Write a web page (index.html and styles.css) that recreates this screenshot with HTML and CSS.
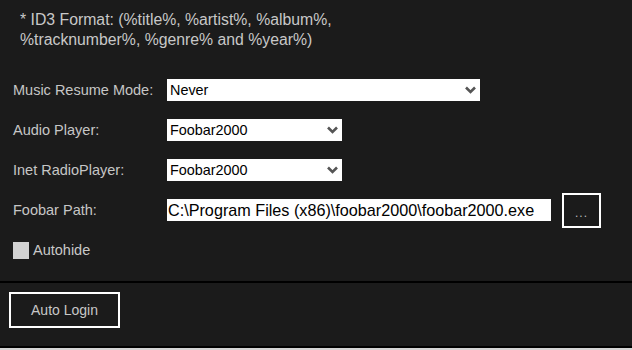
FILE: index.html
```html
<!DOCTYPE html>
<html>
<head>
    <title>Music Settings</title>
    <meta charset="UTF-8">
    <link rel="stylesheet" href="styles.css">
</head>
<body>
    <div class="panel">
        <div class="note">
            * ID3 Format: (%title%, %artist%, %album%,<br>
            %tracknumber%, %genre% and %year%)
        </div>

        <div class="form">
            <div class="row">
                <span class="label">Music Resume Mode:</span>
                <div class="select wide">
                    <span>Never</span>
                    <svg class="chevron" width="11" height="8" viewBox="0 0 11 8"><path d="M1 1.5 L5.5 6 L10 1.5" fill="none" stroke="#555" stroke-width="2.6"/></svg>
                </div>
            </div>
            <div class="row">
                <span class="label">Audio Player:</span>
                <div class="select">
                    <span>Foobar2000</span>
                    <svg class="chevron" width="11" height="8" viewBox="0 0 11 8"><path d="M1 1.5 L5.5 6 L10 1.5" fill="none" stroke="#555" stroke-width="2.6"/></svg>
                </div>
            </div>
            <div class="row">
                <span class="label">Inet RadioPlayer:</span>
                <div class="select">
                    <span>Foobar2000</span>
                    <svg class="chevron" width="11" height="8" viewBox="0 0 11 8"><path d="M1 1.5 L5.5 6 L10 1.5" fill="none" stroke="#555" stroke-width="2.6"/></svg>
                </div>
            </div>
            <div class="row">
                <span class="label">Foobar Path:</span>
                <div class="path">C:\Program Files (x86)\foobar2000\foobar2000.exe</div>
                <div class="browse">...</div>
            </div>
            <div class="row check-row">
                <span class="checkbox"></span>
                <span class="check-label">Autohide</span>
            </div>
        </div>

        <div class="footer">
            <div class="btn">Auto Login</div>
        </div>
    </div>
</body>
</html>
```

FILE: styles.css
```css
body {
    margin: 0;
    background: #d4d4d4;
    font-family: 'Liberation Sans', Arial, sans-serif;
    font-size: 14px;
}
.panel {
    width: 632px;
    height: 348px;
    background: #1b1b1b;
    color: #c6c6c6;
    border-bottom: 2px solid #000;
    box-sizing: border-box;
}

.note {
    padding: 10px 0 0 20px;
    line-height: 20px;
    font-size: 15.8px;
    color: #c8c8c8;
    height: 60px;
    box-sizing: border-box;
}

.form { padding: 10px 0 0 13px; border-bottom: 2px solid #000; height: 223px; box-sizing: border-box; }
.row { display: flex; align-items: center; height: 40px; }
.label { width: 154px; flex: none; font-size: 14.5px; }

.select {
    display: flex;
    align-items: center;
    justify-content: space-between;
    width: 175px;
    height: 22px;
    background: #fff;
    color: #000;
    font-size: 14.4px;
    padding: 0 4px 0 3px;
    box-sizing: border-box;
}
.select.wide { width: 313px; }
.chevron { display: block; }

.path {
    width: 384px;
    height: 22px;
    line-height: 22px;
    background: #fff;
    color: #000;
    font-size: 16.2px;
    padding-left: 1px;
    box-sizing: border-box;
    white-space: nowrap;
    overflow: hidden;
}
.browse {
    width: 39px;
    height: 35px;
    margin-left: 11px;
    border: 2px solid #fff;
    box-sizing: border-box;
    color: #bbb;
    text-align: center;
    line-height: 36px;
    font-size: 12px;
    letter-spacing: 1px;
}

.check-row { gap: 4px; }
.checkbox {
    width: 16px;
    height: 17px;
    background: #d2d2d2;
}
.check-label { color: #c8c8c8; font-size: 14.5px; }

.footer { padding: 9px 0 0 9px; }
.btn {
    width: 111px;
    height: 36px;
    border: 2px solid #fff;
    box-sizing: border-box;
    text-align: center;
    line-height: 32px;
    color: #c8c8c8;
}
```
